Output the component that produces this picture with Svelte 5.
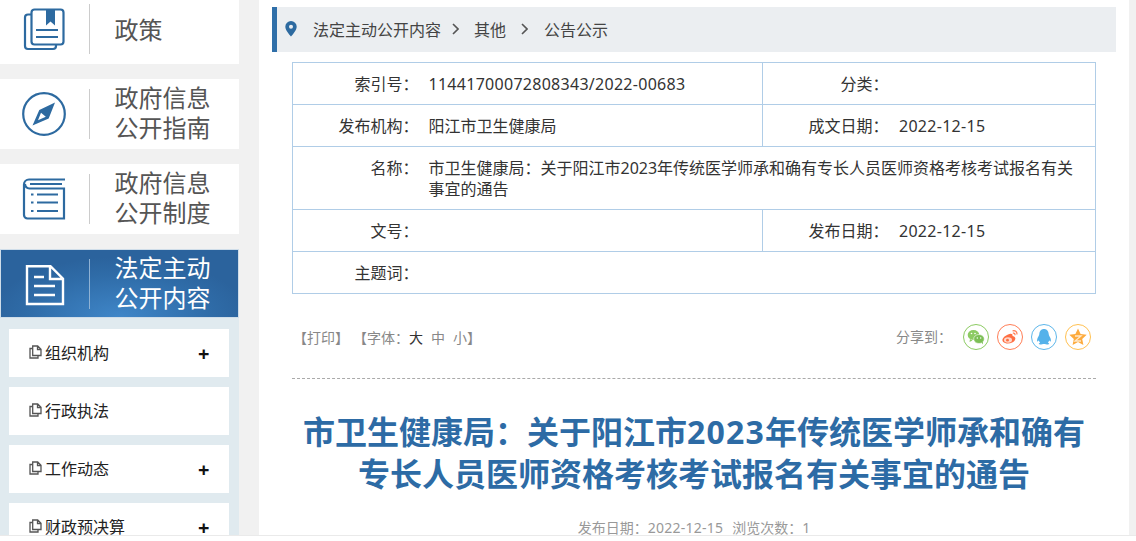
<script>
  const c = '\uFF1A';
  const meta = [
    { label: '索引号' + c, value: '11441700072808343/2022-00683', num: true, label2: '分类' + c, value2: '' },
    { label: '发布机构' + c, value: '阳江市卫生健康局', label2: '成文日期' + c, value2: '2022-12-15' },
    { label: '名称' + c, value: '市卫生健康局' + c + '关于阳江市2023年传统医学师承和确有专长人员医师资格考核考试报名有关事宜的通告', wide: true },
    { label: '文号' + c, value: '', label2: '发布日期' + c, value2: '2022-12-15' },
    { label: '主题词' + c, value: '', wide: true }
  ];
  const subs = [
    { name: '组织机构', plus: true },
    { name: '行政执法', plus: false },
    { name: '工作动态', plus: true },
    { name: '财政预决算', plus: true }
  ];
</script>

<div class="page">
  <aside class="side">
    <div class="tile">
      <div class="ico">
        <svg width="48" height="48" viewBox="0 0 48 48" fill="none" stroke="#2d6aa0" stroke-width="2.200">
          <rect x="11.500" y="4.500" width="32" height="35" rx="3" />
          <path d="M11 9.500H8a3 3 0 0 0-3 3V41a3 3 0 0 0 3 3h25a3 3 0 0 0 3-3v-1" />
          <path d="M26 4h9v16.500l-4.500-4-4.500 4z" fill="#2d6aa0" stroke="none" />
          <path d="M16 25h22M16 32h22" />
        </svg>
      </div>
      <div class="txt one">政策</div>
    </div>
    <div class="tile">
      <div class="ico">
        <svg width="48" height="48" viewBox="0 0 48 48" fill="none" stroke="#2d6aa0" stroke-width="2.200">
          <circle cx="24" cy="24" r="20.800" />
          <path fill="#2d6aa0" stroke="none" fill-rule="evenodd" d="M35 12.500 28.700 28.500 12.500 35.500 19.300 20zM21 22.800 18 30.300 25.800 26.700z" />
        </svg>
      </div>
      <div class="txt">政府信息<br />公开指南</div>
    </div>
    <div class="tile">
      <div class="ico">
        <svg width="48" height="48" viewBox="0 0 48 48" fill="none" stroke="#2d6aa0" stroke-width="2.200">
          <path d="M45 4.500H9a5 5 0 0 0-5 5V40a3.500 3.500 0 0 0 3.500 3.500H44V13.500H9.500A5 5 0 0 1 5 9" />
          <path d="M10 9h32M17 19.500h21M17 27.500h21M17 36h21" />
          <path d="M11 19.500h2.500M11 27.500h2.500M11 36h2.500" />
        </svg>
      </div>
      <div class="txt">政府信息<br />公开制度</div>
    </div>
    <div class="tile active">
      <div class="ico">
        <svg width="48" height="48" viewBox="0 0 48 48" fill="none" stroke="#fff" stroke-width="2.400">
          <path d="M7 6.200h23.500L43 18.700V44H7zM30 6v13h13" />
          <path d="M14 17h10M14 26h21M14 35h21" />
        </svg>
      </div>
      <div class="txt">法定主动<br />公开内容</div>
    </div>
    <ul class="subs">
      {#each subs as s}
        <li>
          <svg width="13" height="14" viewBox="0 0 13 14" fill="none" stroke="#555" stroke-width="1.300">
            <path d="M3.700 10.500V1h5l3.300 3.300v6.200zM8.500 1v3.500H12" />
            <path d="M3.500 3.500H1V13h8v-2.500" />
          </svg>
          <span class="name">{s.name}</span>
          {#if s.plus}<span class="plus">+</span>{/if}
        </li>
      {/each}
    </ul>
  </aside>

  <main class="main">
    <nav class="crumb">
      <svg class="pin" width="12" height="16" viewBox="0 0 12 16">
        <path fill="#2d6aa0" fill-rule="evenodd" d="M6 0a5.700 5.700 0 0 0-5.700 5.700C.3 9.600 6 15.500 6 15.500s5.700-5.900 5.700-9.800A5.700 5.700 0 0 0 6 0zm0 3.700a2 2 0 1 1 0 4 2 2 0 0 1 0-4z" />
      </svg>
      <span>法定主动公开内容</span>
      <svg class="chev" width="7" height="12" viewBox="0 0 7 12" fill="none" stroke="#555" stroke-width="1.600"><path d="M1 1l5 5-5 5" /></svg>
      <span>其他</span>
      <svg class="chev c2" width="7" height="12" viewBox="0 0 7 12" fill="none" stroke="#555" stroke-width="1.600"><path d="M1 1l5 5-5 5" /></svg>
      <span>公告公示</span>
    </nav>

    <table class="info">
      <colgroup><col class="c1" /><col class="c2w" /><col class="c3" /><col /></colgroup>
      <tbody>
        {#each meta as m}
          <tr>
            <th>{m.label}</th>
            {#if m.wide}
              <td colspan="3">{m.value}</td>
            {:else}
              <td class:num={m.num}>{m.value}</td>
              <th>{m.label2}</th>
              <td class="num date">{m.value2}</td>
            {/if}
          </tr>
        {/each}
      </tbody>
    </table>

    <div class="tools">
      <div class="left">
        <span>【打印】</span>
        <span class="font">【字体{c}<b>大</b><i>中</i><i>小</i>】</span>
      </div>
      <div class="share">
        <span class="lbl">分享到{c}</span>
        <svg width="26" height="26" viewBox="0 0 26 26">
          <circle cx="13" cy="13" r="12.500" fill="none" stroke="#8ccb62" />
          <ellipse cx="10.500" cy="11" rx="5.800" ry="5" fill="#8ccb62" />
          <path d="M7 15l-.5 3 3-1.500z" fill="#8ccb62" />
          <ellipse cx="16" cy="15" rx="5.300" ry="4.500" fill="#7cbf55" stroke="#fff" stroke-width=".6" />
          <path d="M18.500 18.500l1.500 2-.3-3z" fill="#7cbf55" />
          <circle cx="8.500" cy="9.500" r=".8" fill="#fff" /><circle cx="12" cy="9.500" r=".8" fill="#fff" />
          <circle cx="14.300" cy="14" r=".7" fill="#fff" /><circle cx="17.700" cy="14" r=".7" fill="#fff" />
        </svg>
        <svg width="26" height="26" viewBox="0 0 26 26">
          <circle cx="13" cy="13" r="12.500" fill="none" stroke="#ff7d55" />
          <path fill="#ff6f43" d="M11 10.500c3-1.500 5-.5 4.500 1.500 2.500.5 3.500 2 2.500 4-1.200 2.500-5 4-8.500 3.500C6.500 19 5 17.300 5.500 15.300 6 13.500 8.500 11.500 11 10.500z" />
          <ellipse cx="11" cy="16" rx="4" ry="2.700" fill="#ffd9cc" />
          <circle cx="10.500" cy="16.200" r="1.400" fill="#ff6f43" />
          <path d="M16 6.800c2-.5 4 .8 4 3.200M16.300 9.200c1-.2 1.800.5 1.700 1.500" fill="none" stroke="#ff7d55" stroke-width="1.200" stroke-linecap="round" />
        </svg>
        <svg width="26" height="26" viewBox="0 0 26 26">
          <circle cx="13" cy="13" r="12.500" fill="none" stroke="#5cb6ea" />
          <path fill="#55b2ea" d="M13 5c3 0 4.500 2.300 4.700 5 .1 1.500 1 2.500 1.700 4 .7 1.700.6 3.300.2 3.500-.4.200-1-.5-1.400-1.200-.2 1-.6 1.800-1.300 2.400 1 .4 1.500.9 1.300 1.300-.3.500-2 .5-3.200.2-.7-.2-.9-.3-2-.3s-1.300.1-2 .3c-1.200.3-2.900.3-3.200-.2-.2-.4.300-.9 1.300-1.300-.7-.6-1.100-1.400-1.300-2.400-.4.700-1 1.400-1.400 1.200-.4-.2-.5-1.800.2-3.500.7-1.500 1.600-2.500 1.700-4C8.500 7.300 10 5 13 5z" />
        </svg>
        <svg width="26" height="26" viewBox="0 0 26 26">
          <circle cx="13" cy="13" r="12.500" fill="none" stroke="#ffc050" />
          <path fill="#fdab3d" d="M13 4.500l2.600 5.600 6.100.7-4.500 4.100 1.200 6-5.400-3-5.400 3 1.200-6-4.500-4.100 6.100-.7z" />
          <path d="M10 12h6l-6 5h6" fill="none" stroke="#ffe9c9" stroke-width="1.300" />
        </svg>
      </div>
    </div>

    <h1>市卫生健康局{c}关于阳江市<span class="yr">2023</span>年传统医学师承和确有<br />专长人员医师资格考核考试报名有关事宜的通告</h1>
    <p class="stamp">发布日期{c}<span class="num">2022-12-15</span><span class="views">浏览次数{c}1</span></p>
  </main>
</div>

<style>
  :global(body) {
    margin: 0;
    background: #fff;
    font-family: "Noto Sans", "Noto Sans CJK SC", sans-serif;
  }
  .page {
    display: flex;
    height: 535px;
    overflow: hidden;
    background: #f1f1f1;
    border-bottom: 1px solid #eaeaea;
    box-sizing: content-box;
  }
  .side {
    flex: 0 0 239px;
    margin-top: -6px;
    display: flex;
    flex-direction: column;
    gap: 15px;
  }
  .tile {
    flex: 0 0 70px;
    height: 70px;
    background: #fff;
    display: flex;
    align-items: center;
    box-sizing: border-box;
  }
  .ico {
    height: 50px;
    display: flex;
    align-items: center;
    justify-content: center;
    padding-right: 1px;
    box-sizing: border-box;
    border-right: 1px solid #ccc;
    flex: 0 0 90px;
  }
  .txt {
    margin-left: 24.500px;
    margin-top: -2px;
    font-size: 24px;
    line-height: 30px;
    color: #555;
  }
  .txt.one { margin-top: 1px; }
  .active {
    flex-basis: 69px;
    height: 69px;
    background: radial-gradient(ellipse 130px 60px at 50% 100%, #3f86c8 0%, #2f6ca8 70%, #2b639d 100%);
    border: 1px solid #cfdde9;
  }
  .active .ico {
    margin-left: -1px;
    border-right-color: #8fb2d4;
  }
  .active .txt { color: #fff; }
  .subs {
    list-style: none;
    margin: -15px 0 0;
    padding: 11px 10px 0 9px;
    background: #e0eaef;
    display: flex;
    flex-direction: column;
    gap: 10px;
    flex: 1;
  }
  .subs li {
    flex: 0 0 48px;
    height: 48px;
    box-sizing: border-box;
    padding: 0 0 2px 20px;
    background: #fff;
    display: flex;
    align-items: center;
    color: #222;
    font-size: 16px;
    position: relative;
  }
  .name { margin-left: 3px; }
  .plus {
    position: absolute;
    left: 189px;
    top: 0;
    font-size: 20px;
    font-weight: 700;
    line-height: 50px;
    color: #111;
  }
  .main {
    flex: 0 0 844px;
    margin-left: 20px;
    padding: 7px 13px 0;
    background: #fff;
    height: 528px;
    overflow: hidden;
  }
  .crumb {
    height: 45px;
    box-sizing: border-box;
    background: #ebeef1;
    border-left: 5px solid #2f6fa9;
    display: flex;
    align-items: center;
    padding: 0 0 2px 8px;
    font-size: 16px;
    color: #444;
  }
  .pin { margin-right: 16px; margin-top: 1px; }
  .chev { margin: 0 15px 0 11px; }
  .chev.c2 { margin-left: 15px; margin-right: 16px; }
  .info {
    margin: 10px 20px 0;
    width: 804px;
    table-layout: fixed;
    border-collapse: collapse;
    font-size: 16px;
    line-height: 21px;
    color: #333;
  }
  .c1, .c3 { width: 127px; }
  .c2w { width: 343px; }
  .info th, .info td {
    border: 1px solid #b0cde7;
    padding: 11px 0 9px;
    vertical-align: top;
    font-weight: 400;
    text-align: left;
  }
  .info th {
    text-align: right;
    border-right: none;
    padding-right: 1px;
  }
  .info td {
    border-left: none;
    padding-left: 9px;
    padding-right: 14px;
  }
  .info td.date { padding-left: 9.500px; }
  .info td.num { letter-spacing: .28px; }
  .tools {
    margin: 0 20px;
    height: 84px;
    border-bottom: 1px dashed #aaa;
    display: flex;
    justify-content: space-between;
    align-items: flex-start;
    font-size: 14px;
    color: #888;
  }
  .left { margin: 34px 0 0 1px; line-height: 20px; display: flex; gap: 4px; }
  .font b { font-weight: 400; color: #333; }
  .font i { font-style: normal; margin-left: 8px; }
  .share { margin-top: 30px; margin-right: 5px; display: flex; align-items: center; gap: 8px; }
  .lbl { margin-right: 3px; line-height: 26px; }
  h1 {
    margin: 32px 0 0;
    text-align: center;
    font-size: 32px;
    line-height: 42px;
    font-weight: 700;
    color: #2d6ba5;
  }
  .yr { letter-spacing: 1.200px; }
  .stamp {
    margin: 23px 0 0;
    text-align: center;
    font-size: 14px;
    line-height: 20px;
    color: #999;
  }
  .stamp .num { letter-spacing: .25px; }
  .views { margin-left: 9px; }
</style>
